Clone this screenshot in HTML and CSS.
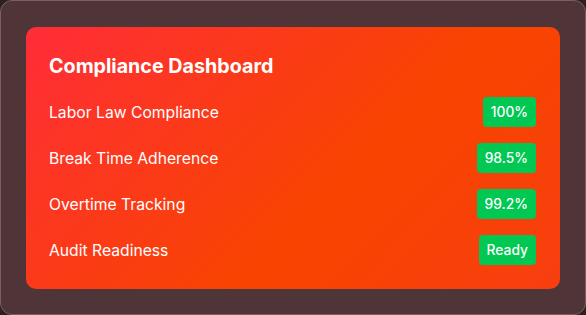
FILE: index.html
```html
<!DOCTYPE html>
<html lang="en">
<head>
    <meta charset="UTF-8">
    <meta name="viewport" content="width=device-width, initial-scale=1.0">
    <title>Compliance Dashboard</title>
    <link rel="stylesheet" href="styles.css">
</head>
<body>
    <div class="frame">
        <!-- compliance card -->
        <section class="card">
            <h2 class="card-title">Compliance Dashboard</h2>
            <div class="row">
                <span class="label">Labor Law Compliance</span>
                <span class="badge">100%</span>
            </div>
            <div class="row">
                <span class="label">Break Time Adherence</span>
                <span class="badge">98.5%</span>
            </div>
            <div class="row">
                <span class="label">Overtime Tracking</span>
                <span class="badge">99.2%</span>
            </div>
            <div class="row">
                <span class="label">Audit Readiness</span>
                <span class="badge">Ready</span>
            </div>
        </section>
    </div>
</body>
</html>
```

FILE: styles.css
```css
* {
    margin: 0;
    padding: 0;
    box-sizing: border-box;
    font-family: Inter, 'Liberation Sans', sans-serif;
}

html, body {
    width: 586px;
    height: 315px;
    background: #2e2021;
    overflow: hidden;
}

/* outer frame */
.frame {
    width: 586px;
    height: 315px;
    background: #4f3537;
    border: 1px solid #7a5f61;
    border-radius: 12px;
    padding: 26px 25px 25px 25px;
}

/* card */
.card {
    height: 262px;
    border-radius: 10px;
    background: linear-gradient(135deg, #ff2d38 0%, #f84400 60%, #f83e10 100%);
    padding: 24px 24px 24px 23px;
    color: #fff;
    display: flex;
    flex-direction: column;
    gap: 16px;
}

.card-title {
    font-size: 19.7px;
    font-weight: 700;
    line-height: 30px;
}

.row {
    display: flex;
    justify-content: space-between;
    align-items: center;
    height: 30px;
}

.label {
    font-size: 15.7px;
}

.badge {
    background: #00c853;
    border-radius: 4px;
    font-size: 13.8px;
    font-weight: 500;
    line-height: 18px;
    padding: 6px 8px;
}
```
